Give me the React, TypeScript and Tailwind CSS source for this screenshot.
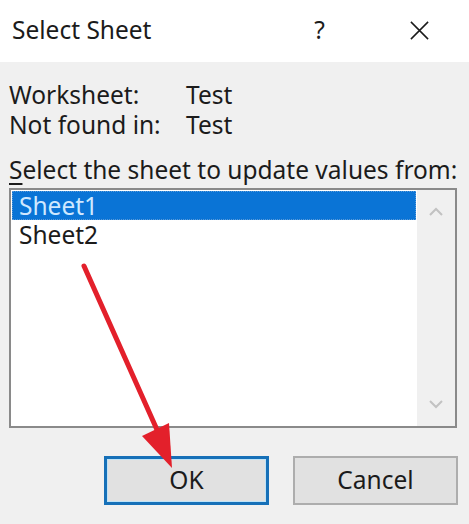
import React from "react";

const sheets = ["Sheet1", "Sheet2"];

const Chevron = ({ up }: { up?: boolean }) => (
  <svg width="16" height="10" viewBox="0 0 16 10" className="text-[#c2c2c2]">
    <path
      d={up ? "M2 8 L8 2 L14 8" : "M2 2 L8 8 L14 2"}
      fill="none"
      stroke="currentColor"
      strokeWidth="2"
    />
  </svg>
);

const App = () => {
  return (
    <div className="relative w-[469px] h-[524px] overflow-hidden bg-[#f0f0f0] text-[#1b1b1b] font-['Noto_Sans',sans-serif] text-[24.5px]">
      {/* title bar */}
      <div className="flex items-center h-[62px] bg-white pl-[12px] pb-[2px]">
        <span className="leading-none">Select Sheet</span>
        <span className="ml-auto mr-[84px] leading-none">?</span>
        <svg width="21" height="21" viewBox="0 0 22 22" className="mr-[39px]">
          <path d="M2 2 L20 20 M20 2 L2 20" stroke="#1b1b1b" strokeWidth="1.6" />
        </svg>
      </div>

      <div className="flex flex-col px-[9px] pt-[18px]">
        <div className="grid grid-cols-[177px_1fr] leading-[30px]">
          <span>Worksheet:</span>
          <span>Test</span>
          <span>Not found in:</span>
          <span>Test</span>
        </div>

        <div className="mt-[15px] leading-[30px] whitespace-nowrap">
          <span className="underline underline-offset-4">S</span>elect the sheet to update values from:
        </div>

        {/* list box */}
        <div className="mt-[3px] flex h-[240px] w-[448px] border-2 border-[#8a8a8a] bg-white">
          <div className="flex-1 pl-[1px] pt-[1px] pr-[1px]">
            {sheets.map((s, i) => (
              <div
                key={s}
                className={
                  i === 0
                    ? "flex items-center h-[29px] pl-[6px] leading-[26px] bg-[#0a74d6] text-[#cfe8ff] border border-dotted border-[#5a9ad8]"
                    : "flex items-center h-[30px] pl-[7px] leading-[28px]"
                }
              >
                {s}
              </div>
            ))}
          </div>
          <div className="flex w-[38px] flex-col items-center justify-between bg-[#f0f0f0] py-[17px]">
            <Chevron up />
            <Chevron />
          </div>
        </div>

        {/* buttons */}
        <div className="mt-[28px] flex justify-end gap-[24px] pr-[2px]">
          <button className="flex h-[49px] w-[165px] items-center justify-center border-[3px] border-[#1670b8] bg-[#e1e1e1] shadow-[inset_0_0_0_1px_#bfe3f7]">
            OK
          </button>
          <button className="flex h-[49px] w-[165px] items-center justify-center border-2 border-[#adadad] bg-[#e1e1e1]">
            Cancel
          </button>
        </div>
      </div>

      {/* annotation arrow */}
      <svg className="pointer-events-none absolute inset-0" width="469" height="524" viewBox="0 0 469 524">
        <line x1="84" y1="266" x2="158" y2="432" stroke="#e3202b" strokeWidth="5" strokeLinecap="round" />
        <polygon points="172,468 142,436 169,423" fill="#e3202b" />
      </svg>
    </div>
  );
};

export default App;
